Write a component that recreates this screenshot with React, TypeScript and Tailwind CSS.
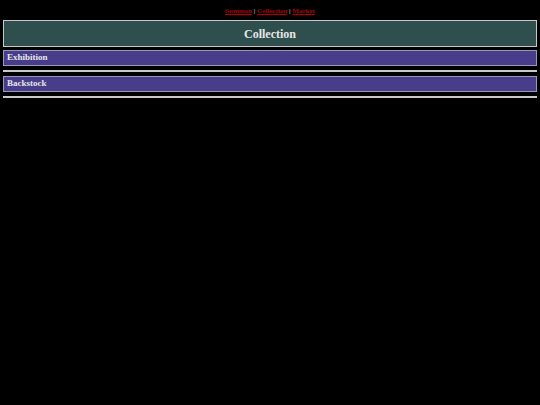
export default function App() {
  return (
    <div
      className="min-h-[405px] bg-black px-[3px] pt-[7px] text-[#e6e6e6]"
      style={{ fontFamily: '"Liberation Serif", "DejaVu Serif", serif' }}
    >
      <nav className="text-center text-[7px] font-bold leading-[9px] text-[#d0d0d0]">
        <a href="#" className="text-[#b00000] underline">Summon</a>
        {' | '}
        <a href="#" className="text-[#b00000] underline">Collection</a>
        {' | '}
        <a href="#" className="text-[#b00000] underline">Market</a>
      </nav>
      <header className="mt-[4px] flex h-[27px] items-center justify-center border border-[#c8c8c8] bg-[#2f4f4f]">
        <h1 className="text-[12px] font-bold">Collection</h1>
      </header>
      <section className="mt-[3px]">
        <div className="flex h-[16px] items-center border border-[#9a96b8] bg-[#483d8b] pl-[3px] text-[9px] font-bold">
          Exhibition
        </div>
        <hr className="mt-[4px] border-t-2 border-[#c8c8c8]" />
      </section>
      <section className="mt-[4px]">
        <div className="flex h-[16px] items-center border border-[#9a96b8] bg-[#483d8b] pl-[3px] text-[9px] font-bold">
          Backstock
        </div>
        <hr className="mt-[4px] border-t-2 border-[#c8c8c8]" />
      </section>
    </div>
  );
}
